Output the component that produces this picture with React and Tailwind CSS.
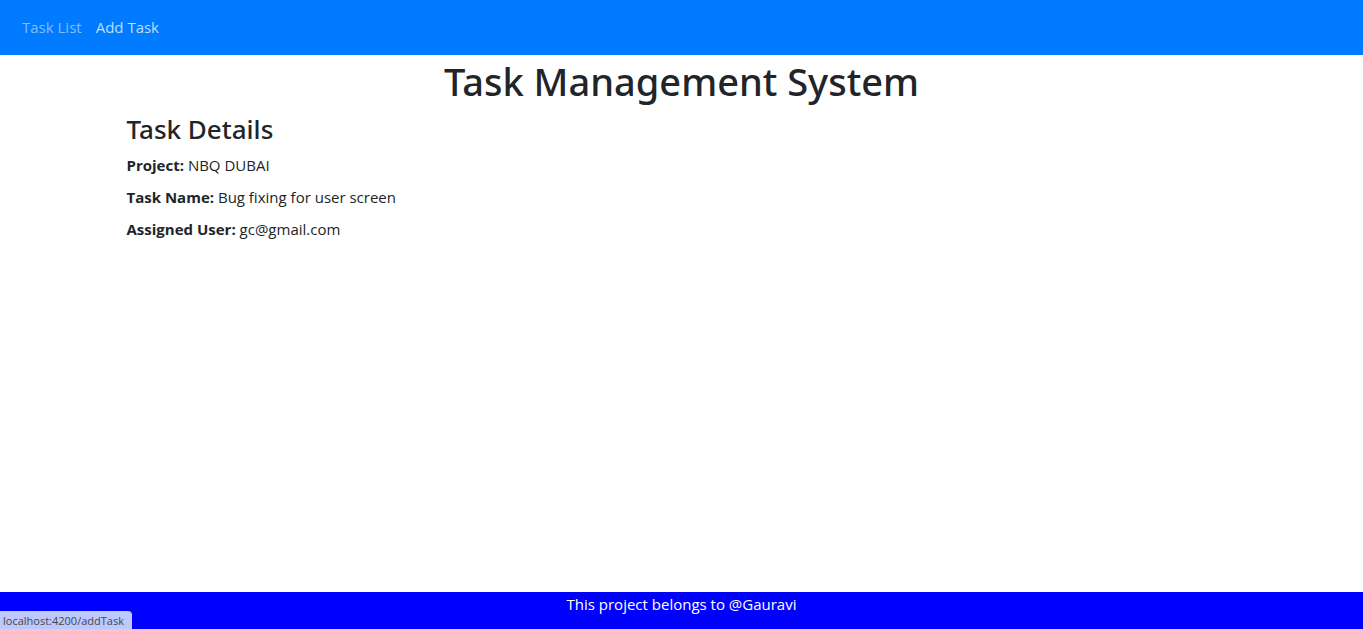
const details = [
  { label: "Project:", value: "NBQ DUBAI" },
  { label: "Task Name:", value: "Bug fixing for user screen" },
  { label: "Assigned User:", value: "gc@gmail.com" },
];

export default function App() {
  return (
    <div className="flex min-h-screen flex-col bg-white font-['Open_Sans','Noto_Sans',sans-serif] text-[15px] leading-6 text-[#212529]">
      <nav className="flex items-center gap-3.5 bg-[#007bff] px-[22px] py-4 leading-[23px]">
        <a href="/tasks" className="text-white/50">Task List</a>
        <a href="/addTask" className="text-white/75">Add Task</a>
      </nav>
      <main className="grow">
        <h1 className="mt-0.5 mb-2 text-center font-['Noto_Sans','Open_Sans',sans-serif] text-[38px] leading-12 font-medium">Task Management System</h1>
        <section className="mx-auto w-full max-w-[1140px] px-[15px]">
          <h2 className="mb-2 font-['Noto_Sans','Open_Sans',sans-serif] text-[26px] leading-8 font-medium">Task Details</h2>
          {details.map(({ label, value }) => (
            <p key={label} className="mb-2">
              <strong className="font-bold">{label}</strong> {value}
            </p>
          ))}
        </section>
      </main>
      <footer className="h-[37px] bg-[#0000ff] text-center text-white">
        <p>This project belongs to @Gauravi</p>
      </footer>
      <div className="fixed bottom-0 left-0 rounded-tr-sm bg-[#bdc8fc] pt-0.5 pr-2 pl-[3px] text-[11px] leading-4 text-[#45474d]">
        localhost:4200/addTask
      </div>
    </div>
  );
}
